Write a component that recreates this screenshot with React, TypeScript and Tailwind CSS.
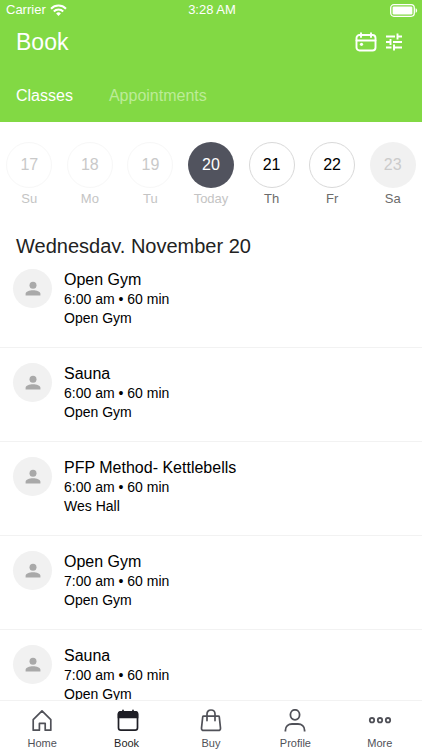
import type { ReactNode } from 'react'

function IcnWifi() {
  return (
    <svg width="17" height="13" viewBox="0 0 17 13" fill="none" stroke="currentColor" strokeWidth="2">
      <path d="M1 4.7a10.6 10.6 0 0115 0" />
      <path d="M3.8 7.5a6.7 6.7 0 019.4 0" />
      <path d="M8.5 12l-2.4-2.5a3.4 3.4 0 014.8 0z" fill="currentColor" stroke="none" />
    </svg>
  )
}
function IcnBattery() {
  return (
    <svg width="28" height="13" viewBox="0 0 28 13" fill="none">
      <rect x=".7" y=".7" width="23.6" height="11.6" rx="3.2" stroke="currentColor" strokeWidth="1.3" />
      <rect x="2.6" y="2.6" width="19.8" height="7.8" rx="1.2" fill="currentColor" />
      <path d="M25.6 4.2c2 .7 2 3.9 0 4.6z" fill="currentColor" />
    </svg>
  )
}
function IcnCalendar() {
  return (
    <svg width="22" height="20" viewBox="0 0 22 20" fill="none" stroke="currentColor" strokeWidth="1.9" strokeLinecap="round">
      <rect x="1.5" y="3" width="19" height="15.5" rx="3" />
      <path d="M1.5 8.5h19M6 1.2V5M16 1.2V5" />
      <circle cx="6.5" cy="12.3" r="1.6" fill="currentColor" stroke="none" />
    </svg>
  )
}
function IcnFilters() {
  return (
    <svg width="18" height="18" viewBox="0 0 18 18" fill="none" stroke="currentColor" strokeWidth="1.9">
      <path d="M1 3.5h9M12.5 3.5H17M12.5.5v6M1 9h4.500M8 9h9M5.500 6v6M1 14.500h5.500M9 14.500h8M9 11.500v6" />
    </svg>
  )
}
function IcnPerson() {
  return (
    <svg width="16" height="16" viewBox="0 0 16 16" fill="currentColor">
      <circle cx="8" cy="4.2" r="3.5" />
      <path d="M.6 14.600v-1.800C.6 10.400 4.400 9.200 8 9.200s7.400 1.200 7.400 3.600v1.800z" />
    </svg>
  )
}
function IcnHome() {
  return (
    <svg width="24" height="24" viewBox="0 0 24 24" fill="none" stroke="currentColor" strokeWidth="1.7" strokeLinejoin="round">
      <path d="M3.2 10.6L12 1.8l8.800 8.800v10.600h-5.600v-6.800H9.400v6.800H3.200z" />
    </svg>
  )
}
function IcnBook() {
  return (
    <svg width="24" height="24" viewBox="0 0 24 24" fill="none" stroke="currentColor" strokeWidth="1.7" strokeLinecap="round">
      <rect x="3.5" y="2.8" width="19" height="18.400" rx="2.400" />
      <path d="M3.500 8.400V5.200a2.400 2.400 0 012.400-2.400h14.200a2.400 2.400 0 012.400 2.400v3.200z" fill="currentColor" />
      <path d="M8 1.300v2M18 1.300v2" />
    </svg>
  )
}
function IcnBag() {
  return (
    <svg width="24" height="24" viewBox="0 0 24 24" fill="none" stroke="currentColor" strokeWidth="1.7" strokeLinecap="round" strokeLinejoin="round">
      <path d="M4.600 7.200h14.800c.5 0 .8.3.9.8l1.200 11.200c.1 1.400-.8 2.200-2 2.200h-15c-1.200 0-2.100-.8-2-2.200L3.700 8c.1-.5.4-.8.9-.8z" />
      <path d="M8 11.600V5C8 2.600 9.700 1 12 1s4 1.600 4 4v6.600" />
    </svg>
  )
}
function IcnProfile() {
  return (
    <svg width="24" height="24" viewBox="0 0 24 24" fill="none" stroke="currentColor" strokeWidth="1.8">
      <ellipse cx="12" cy="5.800" rx="4.600" ry="5" />
      <path d="M2.400 22.600v-1.200c0-4 3-6.400 6.600-6.400h6c3.600 0 6.600 2.400 6.600 6.400v1.200" />
    </svg>
  )
}
function IcnMore() {
  return (
    <svg width="24" height="24" viewBox="0 0 24 24" fill="none" stroke="currentColor" strokeWidth="1.8">
      <circle cx="4" cy="11.200" r="2.200" />
      <circle cx="12" cy="11.200" r="2.200" />
      <circle cx="20" cy="11.200" r="2.200" />
    </svg>
  )
}

const days = [
  { num: 17, label: 'Su', circle: 'border border-[#f7f7f7] text-[#c9c9c9]', text: 'text-[#c4c4c4]' },
  { num: 18, label: 'Mo', circle: 'border border-[#f7f7f7] text-[#c9c9c9]', text: 'text-[#c4c4c4]' },
  { num: 19, label: 'Tu', circle: 'border border-[#f7f7f7] text-[#c9c9c9]', text: 'text-[#c4c4c4]' },
  { num: 20, label: 'Today', circle: 'bg-[#51535e] text-white', text: 'text-[#c4c4c4]' },
  { num: 21, label: 'Th', circle: 'border border-[#d9d9d9] text-black', text: 'text-[#6b6b6b]' },
  { num: 22, label: 'Fr', circle: 'border border-[#d9d9d9] text-black', text: 'text-[#6b6b6b]' },
  { num: 23, label: 'Sa', circle: 'bg-[#f1f1f1] text-[#cbcbcb]', text: 'text-[#6b6b6b]' },
]

const classes = [
  { title: 'Open Gym', time: '6:00 am', staff: 'Open Gym' },
  { title: 'Sauna', time: '6:00 am', staff: 'Open Gym' },
  { title: 'PFP Method- Kettlebells', time: '6:00 am', staff: 'Wes Hall' },
  { title: 'Open Gym', time: '7:00 am', staff: 'Open Gym' },
  { title: 'Sauna', time: '7:00 am', staff: 'Open Gym' },
]

const tabs: { label: string; icon: ReactNode; active?: boolean }[] = [
  { label: 'Home', icon: <IcnHome /> },
  { label: 'Book', icon: <IcnBook />, active: true },
  { label: 'Buy', icon: <IcnBag /> },
  { label: 'Profile', icon: <IcnProfile /> },
  { label: 'More', icon: <IcnMore /> },
]

export default function App() {
  return (
    <div className="flex h-screen flex-col overflow-hidden bg-white font-['Liberation_Sans',Arial,sans-serif] text-black">
      <header className="shrink-0 bg-[#82d944] text-white">
        <div className="grid h-5 grid-cols-3 items-center pr-1 pl-1.5 text-[13px] leading-5">
          <div className="flex items-center gap-1">
            <span>Carrier</span>
            <IcnWifi />
          </div>
          <span className="text-center">3:28 AM</span>
          <div className="flex justify-end">
            <IcnBattery />
          </div>
        </div>
        <div className="flex h-11 items-center justify-between px-4">
          <h1 className="text-[23px] leading-7">Book</h1>
          <div className="flex items-center gap-2 pr-[3px]">
            <button type="button" aria-label="Calendar"><IcnCalendar /></button>
            <button type="button" aria-label="Filters"><IcnFilters /></button>
          </div>
        </div>
        <div className="flex h-[58px] gap-9 px-4 pt-5 text-base leading-6">
          <button type="button" className="flex items-start">Classes</button>
          <button type="button" className="flex items-start text-[#bcec98]">Appointments</button>
        </div>
      </header>

      <div className="-mx-px grid shrink-0 grid-cols-7 pt-5">
        {days.map((d) => (
          <button key={d.num} type="button" className="flex flex-col items-center gap-[3px]">
            <span className={`flex size-[46px] items-center justify-center rounded-full text-base ${d.circle}`}>
              {d.num}
            </span>
            <span className={`text-[13px] leading-4 ${d.text}`}>{d.label}</span>
          </button>
        ))}
      </div>

      <h2 className="mt-[27px] mb-px h-[19px] shrink-0 overflow-hidden px-4 text-xl leading-6 text-[#222]">
        Wednesday, November 20
      </h2>

      <ul className="min-h-0 flex-1 overflow-hidden">
        {classes.map((c, i) => (
          <li key={i} className="flex h-[94px] gap-3 border-b border-[#f2f2f2] pt-[15px] pl-[13px]">
            <div className="flex size-[39px] items-center justify-center rounded-full bg-[#f1f1f1] text-[#a9a9a9]">
              <IcnPerson />
            </div>
            <div className="pt-px text-sm leading-[19px]">
              <h3 className="text-base leading-5">{c.title}</h3>
              <p>{c.time} • 60 min</p>
              <p>{c.staff}</p>
            </div>
          </li>
        ))}
      </ul>

      <nav className="grid h-[50px] shrink-0 grid-cols-5 border-t border-[#f2f2f2] bg-white">
        {tabs.map((t) => (
          <button
            key={t.label}
            type="button"
            className={`flex flex-col items-center gap-[3px] pt-2 text-[11px] leading-[14px] ${t.active ? 'text-[#1f1f26]' : 'text-[#505158]'}`}
          >
            {t.icon}
            <span>{t.label}</span>
          </button>
        ))}
      </nav>
    </div>
  )
}
